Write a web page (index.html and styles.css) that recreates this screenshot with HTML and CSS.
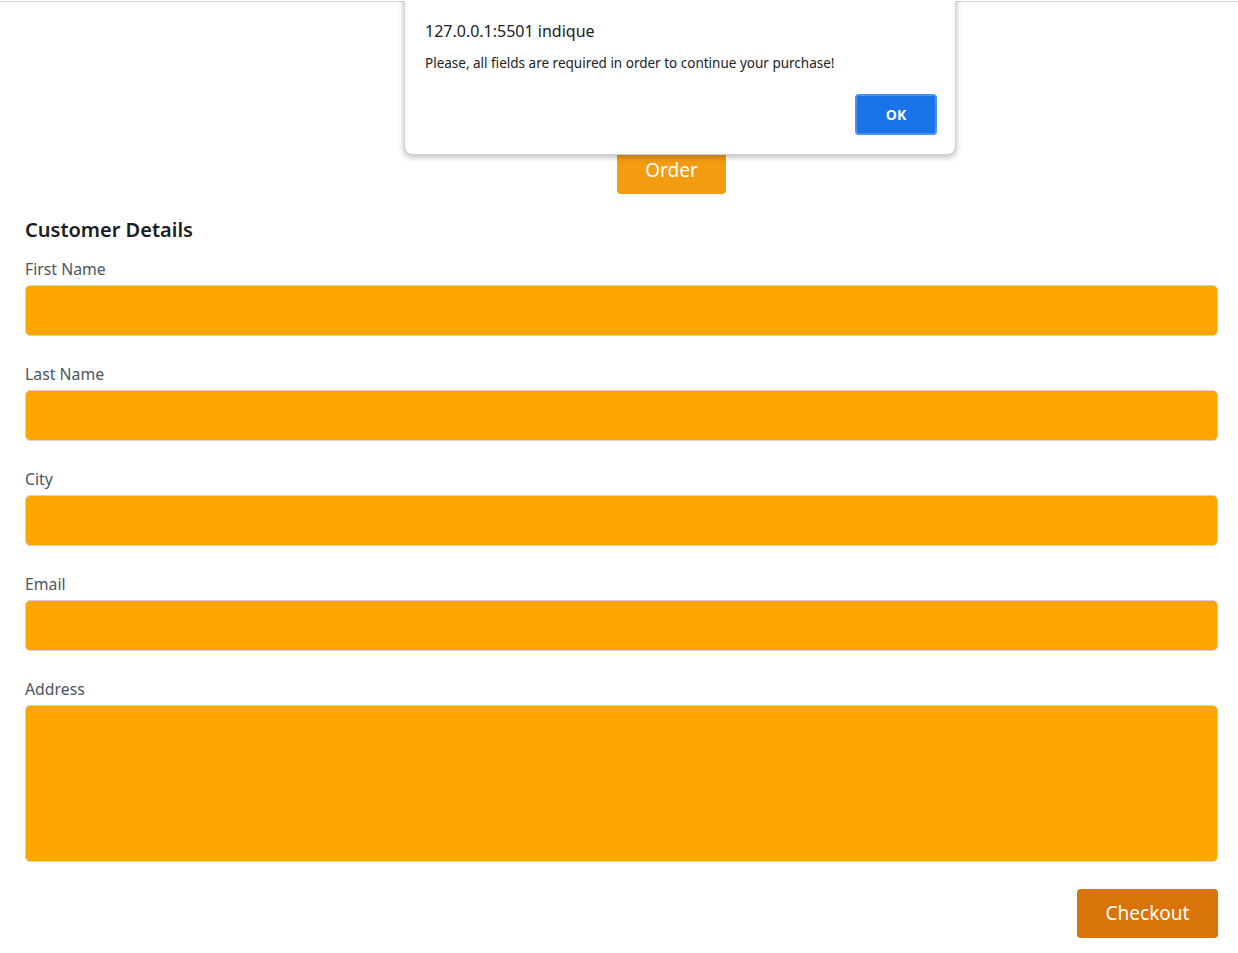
FILE: index.html
```html
<!DOCTYPE html>
<html lang="pt">
<head>
<meta charset="utf-8">
<title>Order</title>
<link rel="stylesheet" href="styles.css">
</head>
<body>
<div class="page">
  <div class="order-row">
    <button class="btn-order" type="button">Order</button>
  </div>
  <form class="customer">
    <h5 class="title">Customer Details</h5>
    <div class="field">
      <label for="fn">First Name</label>
      <input id="fn" type="text" class="control">
    </div>
    <div class="field">
      <label for="ln">Last Name</label>
      <input id="ln" type="text" class="control">
    </div>
    <div class="field">
      <label for="city">City</label>
      <input id="city" type="text" class="control">
    </div>
    <div class="field">
      <label for="email">Email</label>
      <input id="email" type="email" class="control">
    </div>
    <div class="field">
      <label for="addr">Address</label>
      <textarea id="addr" class="control area"></textarea>
    </div>
    <div class="actions">
      <button class="btn-checkout" type="button">Checkout</button>
    </div>
  </form>
</div>

<div class="alert">
  <div class="alert-title">127.0.0.1:5501 indique</div>
  <div class="alert-msg">Please, all fields are required in order to continue your purchase!</div>
  <div class="alert-actions">
    <button class="alert-ok" type="button">OK</button>
  </div>
</div>
</body>
</html>
```

FILE: styles.css
```css
* { box-sizing: border-box; }

html, body {
  margin: 0;
  padding: 0;
  background: #ffffff;
}

body {
  font-family: "Noto Sans", "Open Sans", sans-serif;
  color: #212529;
  border-top: 1px solid #ffffff;
  position: relative;
  min-height: 953px;
}

body::before {
  content: "";
  display: block;
  height: 1px;
  background: #d6d6d6;
}

.page {
  padding: 0 20px 0 25px;
}

.order-row {
  display: flex;
  padding-top: 148px;
}

.btn-order {
  margin-left: 592px;
  width: 109px;
  height: 44px;
  border: none;
  border-radius: 4px;
  background: #f39c12;
  color: #ffffff;
  font-family: inherit;
  font-size: 19px;
  padding: 0 0 4px;
}

.customer {
  margin-top: 21px;
}

.title {
  margin: 0 0 10px;
  font-size: 20px;
  font-weight: 600;
  line-height: 30px;
  color: #1a1d21;
}

.field {
  display: flex;
  flex-direction: column;
  margin-bottom: 24px;
}

.field label {
  font-size: 15.8px;
  line-height: 24px;
  color: #4c5560;
  padding-top: 2px;
  margin-bottom: 4px;
}

.control {
  display: block;
  width: 100%;
  height: 51px;
  background: #ffa500;
  border: 1px solid #cfd3d8;
  border-radius: 5px;
  font: inherit;
  margin: 0;
}

.area {
  height: 157px;
  resize: none;
}

.actions {
  display: flex;
  justify-content: flex-end;
  margin-top: 27px;
}

.btn-checkout {
  width: 141px;
  height: 49px;
  border: none;
  border-radius: 4px;
  background: #d97508;
  color: #ffffff;
  font-family: inherit;
  font-size: 19px;
  padding: 0 0 2px;
}

.alert {
  position: absolute;
  top: -12px;
  left: 404px;
  width: 552px;
  height: 166px;
  background: #ffffff;
  border: 1px solid #d0d0d0;
  border-radius: 8px;
  box-shadow: 0 2px 6px rgba(0, 0, 0, 0.28);
  padding: 30px 20px 0 20px;
  font-family: "Noto Sans", "Open Sans", sans-serif;
}

.alert-title {
  font-size: 16px;
  line-height: 22px;
  color: #202124;
}

.alert-msg {
  margin-top: 11px;
  font-size: 13.5px;
  line-height: 20px;
  color: #202124;
}

.alert-actions {
  display: flex;
  justify-content: flex-end;
  margin-top: 21px;
}

.alert-ok {
  width: 82px;
  height: 41px;
  background: #1a73e8;
  border: 2px solid #4b8ff0;
  border-radius: 4px;
  color: #ffffff;
  font-family: "Noto Sans", sans-serif;
  font-weight: 700;
  font-size: 14px;
  padding: 0;
  margin-right: -2px;
}
```
